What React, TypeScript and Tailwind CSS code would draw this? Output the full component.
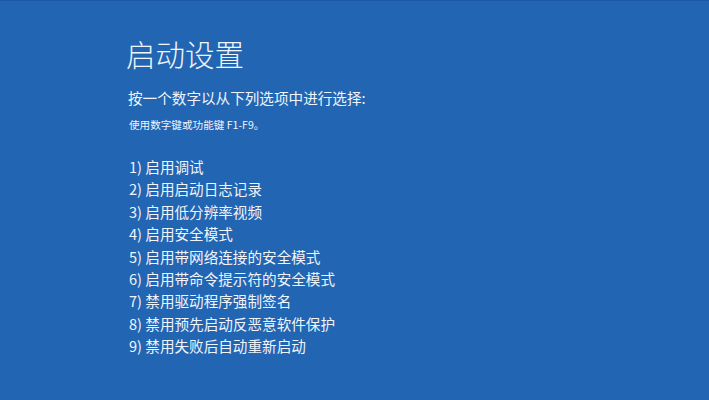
const items = [
  "1) 启用调试",
  "2) 启用启动日志记录",
  "3) 启用低分辨率视频",
  "4) 启用安全模式",
  "5) 启用带网络连接的安全模式",
  "6) 启用带命令提示符的安全模式",
  "7) 禁用驱动程序强制签名",
  "8) 禁用预先启动反恶意软件保护",
  "9) 禁用失败后自动重新启动",
];

export default function App() {
  return (
    <div
      className="h-[400px] w-[709px] overflow-hidden border-t border-[#1b58a6] bg-[#2165b3] text-[#f0f4fb]"
      style={{ fontFamily: '"Noto Sans CJK SC", "Noto Sans", sans-serif' }}
    >
      <div className="flex flex-col pl-[126px] pt-[32px]">
        <h1 className="text-[29.5px] font-light leading-[40px]">启动设置</h1>
        <p className="mt-[14px] pl-[2px] text-[14.6px] leading-[22px]">
          按一个数字以从下列选项中进行选择:
        </p>
        <p className="mt-[9px] pl-[3px] text-[10.6px] leading-[14px]">使用数字键或功能键 F1-F9。</p>
        <ul className="mt-[24px] flex flex-col pl-[3px]">
          {items.map((t) => (
            <li key={t} className="text-[14.6px] leading-[22.4px]">
              {t}
            </li>
          ))}
        </ul>
      </div>
    </div>
  );
}
